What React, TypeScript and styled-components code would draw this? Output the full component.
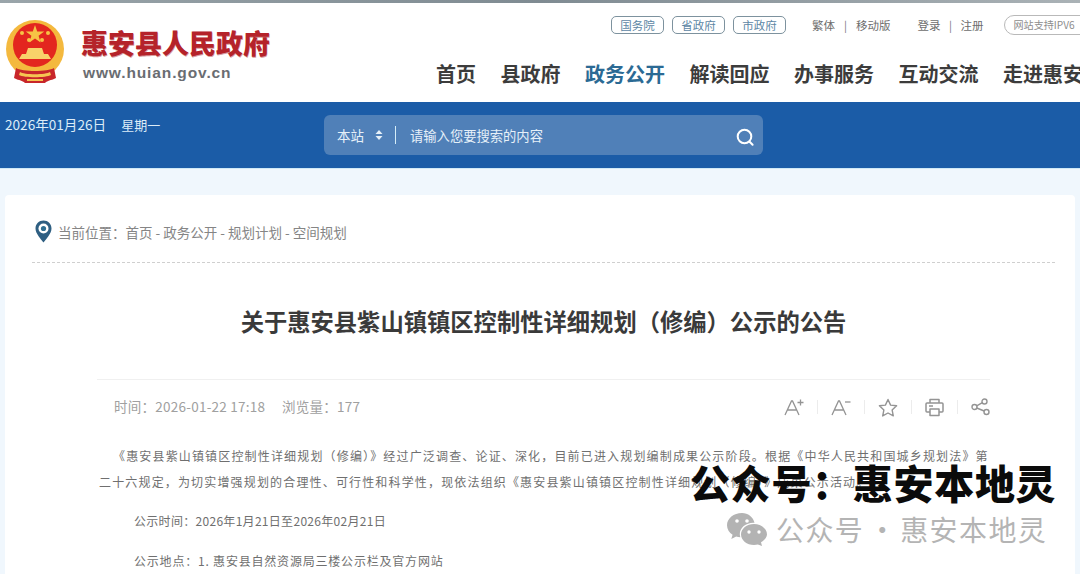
import React from "react";
import styled, { createGlobalStyle } from "styled-components";

const CJK = `"Noto Sans CJK SC", "Noto Sans", sans-serif`;

const Global = createGlobalStyle`
  html, body { margin: 0; padding: 0; width: 1080px; height: 574px; overflow: hidden; background: #f0f7fd; }
  body { font-family: ${CJK}; }
  * { box-sizing: border-box; }
`;

const Page = styled.div`
  position: relative;
  width: 1080px;
  height: 574px;
  overflow: hidden;
`;
const TopStrip = styled.div`
  height: 3px;
  background: linear-gradient(90deg, #9aa5aa, #7f8b92 50%, #aab2b6);
`;
const Header = styled.header`
  height: 99px;
  background: #fff;
  display: flex;
  padding-left: 5px;
`;
const Brand = styled.div`
  display: flex;
  flex: 0 0 auto;
  width: 431px;
  padding-top: 15px;
`;
const BrandText = styled.div`
  display: flex;
  flex-direction: column;
  margin-left: 14px;
  padding-top: 6px;
`;
const BrandName = styled.div`
  font-size: 27px;
  line-height: 38px;
  font-weight: 900;
  color: #b5232a;
  white-space: nowrap;
  text-shadow: 0.5px 0.5px 0 #d9a0a0;
`;
const BrandUrl = styled.div`
  font-family: "Liberation Sans", sans-serif;
  font-weight: 700;
  font-size: 15.5px;
  line-height: 20px;
  margin: 1px 0 0 2px;
  letter-spacing: 0.88px;
  color: #6a6d72;
`;
const HeadRight = styled.div`
  flex: 1;
  min-width: 0;
  display: flex;
  flex-direction: column;
`;
const TopLinks = styled.div`
  display: flex;
  align-items: center;
  height: 24px;
  margin-top: 10px;
  padding-left: 175px;
  white-space: nowrap;
`;
const GovPill = styled.span`
  flex: 0 0 53px;
  height: 18px;
  margin-right: 8px;
  border: 1px solid #7d929e;
  border-radius: 5px;
  font-size: 11.5px;
  line-height: 16px;
  text-align: center;
  color: #5d87a5;
`;
const SmallLink = styled.span<{ $ml?: number }>`
  flex: 0 0 auto;
  font-size: 11.5px;
  color: #6d6d6d;
  margin-left: ${(p) => p.$ml ?? 0}px;
`;
const Sep = styled.span<{ $w: number }>`
  flex: 0 0 ${(p) => p.$w}px;
  text-align: center;
  font-size: 11px;
  color: #777;
`;
const Ipv6 = styled.span`
  flex: 0 0 90px;
  height: 20px;
  margin-left: 20px;
  padding-left: 9px;
  border: 1px solid #b9b9b9;
  border-radius: 10px;
  font-size: 10.1px;
  line-height: 18px;
  color: #8d8d8d;
`;
const Nav = styled.nav`
  display: flex;
  gap: 24.5px;
  margin-top: 22px;
  white-space: nowrap;
`;
const NavItem = styled.span<{ $active?: boolean }>`
  flex: 0 0 auto;
  font-size: 20px;
  line-height: 30px;
  font-weight: 700;
  color: ${(p) => (p.$active ? "#2b6a94" : "#3c3c3c")};
`;
const Band = styled.div`
  height: 67px;
  background: #1b5ca7;
  display: flex;
  padding: 13px 0 0 5px;
  border-bottom: 1px solid #cfe9f7;
`;
const DateText = styled.div`
  width: 319px;
  font-size: 13px;
  line-height: 18px;
  color: #dcecf8;
  display: flex;
  align-items: baseline;
  gap: 15px;
  white-space: nowrap;
`;
const DateValue = styled.span`
  font-size: 13.6px;
`;
const Search = styled.div`
  width: 439px;
  height: 40px;
  border-radius: 6px;
  background: #5080b8;
  display: flex;
  align-items: center;
  padding: 0 8px 0 13px;
  color: #e6f0f8;
`;
const Scope = styled.span`
  font-size: 13.5px;
  width: 37px;
`;
const Divider = styled.span`
  width: 1px;
  height: 18px;
  background: #d5edf8;
  margin: 0 14px 0 11px;
`;
const Placeholder = styled.span`
  flex: 1;
  font-size: 13.3px;
`;
const Main = styled.main`
  margin: 26px 0 0 5px;
  width: 1070px;
  height: 400px;
  background: #fff;
  border-radius: 4px 4px 0 0;
  padding: 0 20px 0 27px;
`;
const Crumbs = styled.div`
  display: flex;
  align-items: center;
  height: 68px;
  padding-top: 6px;
  border-bottom: 1px dashed #cfcfcf;
  font-size: 13.5px;
  color: #858585;
  gap: 6px;
  white-space: nowrap;
`;
const PinSlot = styled.span`
  display: flex;
  margin-left: 3px;
`;
const Title = styled.h1`
  margin: 41px 0 0;
  width: 1023px;
  text-align: center;
  font-size: 23.3px;
  line-height: 34px;
  font-weight: 700;
  color: #3a3a3a;
  white-space: nowrap;
`;
const MetaRow = styled.div`
  margin: 41px 0 0 65px;
  width: 893px;
  height: 55px;
  border-top: 1px solid #f0f0f0;
  display: flex;
  align-items: center;
  padding: 0 0 0 17px;
  font-size: 13.5px;
  color: #a0a0a0;
  white-space: nowrap;
`;
const MetaText = styled.span<{ $w?: number }>`
  width: ${(p) => (p.$w ? `${p.$w}px` : "auto")};
  padding-bottom: 2px;
  letter-spacing: 0.25px;
`;
const Tools = styled.div`
  margin-left: auto;
  display: flex;
  align-items: center;
  color: #949494;
`;
const ToolSep = styled.span`
  width: 1px;
  height: 14px;
  margin: 0 13px;
  background: #ececec;
`;
const Article = styled.div`
  margin: 9px 0 0 67px;
  width: 900px;
  font-size: 12px;
  color: #6f6f6f;
  letter-spacing: 1.16px;
  white-space: nowrap;
`;
const Para = styled.p<{ $first?: boolean }>`
  margin: 0;
  padding-left: ${(p) => (p.$first ? 14 : 0)}px;
  line-height: 26px;
`;
const Plain = styled.p<{ $mt: number; $ls: number }>`
  margin: ${(p) => p.$mt}px 0 0;
  padding-left: 35px;
  letter-spacing: ${(p) => p.$ls}px;
  line-height: 20px;
`;
const Overlay = styled.div`
  position: absolute;
  left: 690px;
  top: 457px;
  display: flex;
  flex-direction: column;
  white-space: nowrap;
`;
const BigName = styled.div`
  font-size: 40px;
  line-height: 50px;
  font-weight: 900;
  color: #0b0b0b;
  letter-spacing: 0.7px;
`;
const Wm = styled.div`
  display: flex;
  align-items: center;
  margin: 2px 0 0 37px;
  font-size: 28px;
  line-height: 40px;
  color: #b4b4b4;
  letter-spacing: 1.4px;
  gap: 9px;
`;
const WmLabel = styled.span`
  display: flex;
`;
const WmDot = styled.span`
  width: 36px;
  text-align: center;
  letter-spacing: 0;
`;

const Emblem = () => (
  <svg width="62" height="68" viewBox="0 0 62 68">
    <circle cx="30" cy="31" r="29" fill="#f4b93e" />
    <circle cx="30" cy="27" r="22" fill="#e3261f" />
    <path d="M30 7l2.200 6.600h7l-5.600 4.200 2 6.600L30 20.500l-5.600 3.900 2-6.600-5.600-4.200h7z" fill="#f6c445" />
    <circle cx="17" cy="15" r="2" fill="#f6c445" />
    <circle cx="43" cy="15" r="2" fill="#f6c445" />
    <circle cx="24" cy="22" r="2" fill="#f6c445" />
    <circle cx="37" cy="22" r="2" fill="#f6c445" />
    <path d="M14 41h32l-3-5h-4l-2-6H23l-2 6h-4z" fill="#f8d26a" />
    <path d="M11 50c6 4 32 4 38 0l2 10c-6 3-8 2-11 5H20c-3-3-5-2-11-5z" fill="#c8262a" />
    <path d="M15 54c4 3 26 3 30 0l1 3c-5 3-27 3-32 0zM22 61h16v2H22z" fill="#f5c552" />
  </svg>
);

const Pin = () => (
  <svg width="17" height="23" viewBox="0 0 17 23">
    <path d="M8.500 0.500C4 0.500 0.500 4 0.500 8.400c0 5.200 5.600 10.800 8 14 2.400-3.200 8-8.800 8-14C16.500 4 13 0.500 8.500 0.500z" fill="#2f5f82" />
    <circle cx="8.500" cy="8.500" r="5" fill="#fff" />
    <circle cx="8.500" cy="8.500" r="2.600" fill="#2f6f92" />
  </svg>
);

const Stepper = () => (
  <svg width="10" height="12" viewBox="0 0 10 12" fill="#e6f0f8">
    <path d="M5 1l3.500 4h-7zM5 11L1.500 7h7z" />
  </svg>
);

const SearchIcon = () => (
  <svg width="20" height="20" viewBox="0 0 20 20" fill="none" stroke="#fff" strokeWidth="2" strokeLinecap="round" style={{ marginTop: 3 }}>
    <circle cx="9.500" cy="9.500" r="6.800" />
    <path d="M14.600 14.800l3 3" />
  </svg>
);

const FontIcon = ({ plus }: { plus?: boolean }) => (
  <svg width="20" height="18" viewBox="0 0 20 18" fill="none" stroke="currentColor" strokeWidth="1.300">
    <path d="M1 17L7.500 3h1L15 17M3.500 12h9.500" />
    {plus ? <path d="M13.500 4.500h6M16.500 1.500v6" /> : <path d="M14 4h5.500" />}
  </svg>
);

const StarIcon = () => (
  <svg width="20" height="19" viewBox="0 0 20 19" fill="none" stroke="currentColor" strokeWidth="1.400" strokeLinejoin="round">
    <path d="M10 1.500l2.600 5.600 6 .7-4.500 4.100 1.200 6L10 15l-5.300 2.900 1.200-6L1.400 7.800l6-.7z" />
  </svg>
);

const PrintIcon = () => (
  <svg width="19" height="19" viewBox="0 0 19 19" fill="none" stroke="currentColor" strokeWidth="1.500" strokeLinejoin="round">
    <path d="M5 5V1.500h9V5M5 14H2a1 1 0 0 1-1-1V6a1 1 0 0 1 1-1h15a1 1 0 0 1 1 1v7a1 1 0 0 1-1 1h-3" />
    <path d="M5 11h9v6.500H5zM4 8h4" />
  </svg>
);

const ShareIcon = () => (
  <svg width="19" height="18" viewBox="0 0 19 18" fill="none" stroke="currentColor" strokeWidth="1.400">
    <circle cx="13.500" cy="3.500" r="2.500" />
    <circle cx="15.500" cy="14" r="2.500" />
    <circle cx="3.500" cy="9" r="2.500" />
    <path d="M5.700 7.800l5.700-3.200M5.800 10l7.400 3" />
  </svg>
);

const WeChat = () => (
  <svg width="40" height="33" viewBox="0 0 40 33" fill="#b3b3b3">
    <path d="M15 0C6.700 0 0 5.500 0 12.300c0 3.900 2.200 7.300 5.600 9.500L4.300 26l4.900-2.500c1.300.4 2.700.6 4.100.7-.3-1-.5-2-.5-3.100 0-6.300 6-11.400 13.500-11.400h1.200C26.200 4.100 21 0 15 0z" />
    <path d="M27 11c-7.200 0-13 4.700-13 10.500S19.800 32 27 32c1.400 0 2.700-.2 3.900-.5l4.100 1.500-1-3.700c3.500-1.900 6-5.300 6-7.800C40 15.700 34.200 11 27 11z" />
    <circle cx="10" cy="8" r="1.800" fill="#fff" />
    <circle cx="20" cy="8" r="1.800" fill="#fff" />
    <circle cx="22" cy="19" r="1.700" fill="#fff" />
    <circle cx="32" cy="19" r="1.700" fill="#fff" />
  </svg>
);

const nav = ["首页", "县政府", "政务公开", "解读回应", "办事服务", "互动交流", "走进惠安"];

export default function App() {
  return (
    <Page>
      <Global />
      <TopStrip />
      <Header>
        <Brand>
          <Emblem />
          <BrandText>
            <BrandName>惠安县人民政府</BrandName>
            <BrandUrl>www.huian.gov.cn</BrandUrl>
          </BrandText>
        </Brand>
        <HeadRight>
          <TopLinks>
            <GovPill>国务院</GovPill>
            <GovPill>省政府</GovPill>
            <GovPill>市政府</GovPill>
            <SmallLink $ml={18}>繁体</SmallLink>
            <Sep $w={21}>|</Sep>
            <SmallLink>移动版</SmallLink>
            <SmallLink $ml={27}>登录</SmallLink>
            <Sep $w={20}>|</Sep>
            <SmallLink>注册</SmallLink>
            <Ipv6>网站支持IPV6</Ipv6>
          </TopLinks>
          <Nav>
            {nav.map((n) => (
              <NavItem key={n} $active={n === "政务公开"}>{n}</NavItem>
            ))}
          </Nav>
        </HeadRight>
      </Header>
      <Band>
        <DateText>
          <DateValue>2026年01月26日</DateValue>
          <span>星期一</span>
        </DateText>
        <Search>
          <Scope>本站</Scope>
          <Stepper />
          <Divider />
          <Placeholder>请输入您要搜索的内容</Placeholder>
          <SearchIcon />
        </Search>
      </Band>
      <Main>
        <Crumbs>
          <PinSlot><Pin /></PinSlot>
          <span>当前位置：首页 - 政务公开 - 规划计划 - 空间规划</span>
        </Crumbs>
        <Title>关于惠安县紫山镇镇区控制性详细规划（修编）公示的公告</Title>
        <MetaRow>
          <MetaText $w={168}>时间：2026-01-22 17:18</MetaText>
          <MetaText>浏览量：177</MetaText>
          <Tools>
            <FontIcon plus />
            <ToolSep />
            <FontIcon />
            <ToolSep />
            <StarIcon />
            <ToolSep />
            <PrintIcon />
            <ToolSep />
            <ShareIcon />
          </Tools>
        </MetaRow>
        <Article>
          <Para $first>《惠安县紫山镇镇区控制性详细规划（修编）》经过广泛调查、论证、深化，目前已进入规划编制成果公示阶段。根据《中华人民共和国城乡规划法》第</Para>
          <Para>二十六规定，为切实增强规划的合理性、可行性和科学性，现依法组织《惠安县紫山镇镇区控制性详细规划（修编）》成果公示活动。</Para>
          <Plain $mt={16} $ls={0.3}>公示时间：2026年1月21日至2026年02月21日</Plain>
          <Plain $mt={20} $ls={0.8}>公示地点：1. 惠安县自然资源局三楼公示栏及官方网站</Plain>
        </Article>
      </Main>
      <Overlay>
        <BigName>公众号：惠安本地灵</BigName>
        <Wm>
          <WeChat />
          <WmLabel>
            <span>公众号</span>
            <WmDot>·</WmDot>
            <span>惠安本地灵</span>
          </WmLabel>
        </Wm>
      </Overlay>
    </Page>
  );
}
